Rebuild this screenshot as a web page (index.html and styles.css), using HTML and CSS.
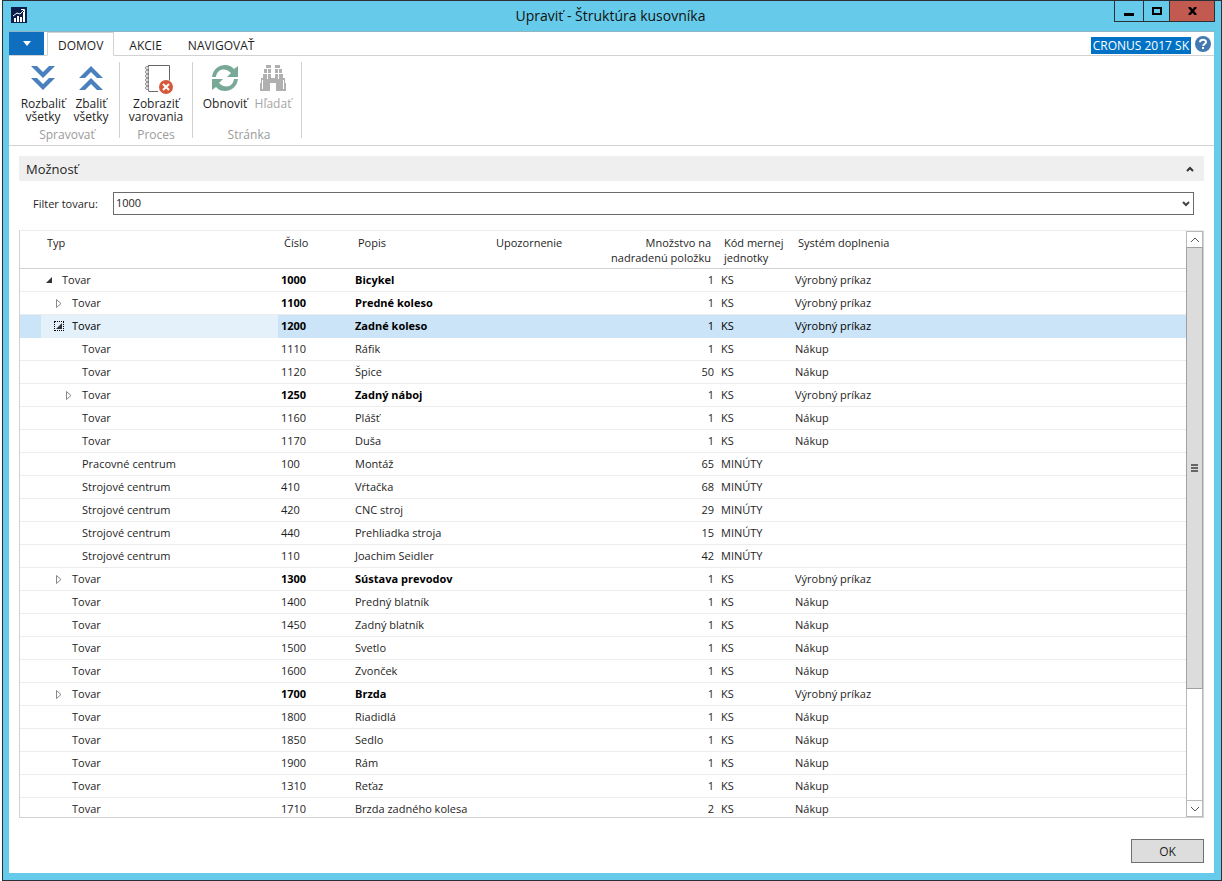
FILE: index.html
```html
<!DOCTYPE html>
<html lang="sk">
  <head>
    <meta charset="UTF-8" />
    <meta name="viewport" content="width=device-width, initial-scale=1.0" />
    <link rel="stylesheet" href="styles.css">
    <title>Upraviť - Štruktúra kusovníka</title>
  </head>
  <body>
    <div class="window">
      <header class="titlebar">
        <svg class="app-icon" width="16" height="16" viewBox="0 0 16 16">
          <rect width="16" height="16" fill="#0b1f4b" />
          <path d="M3 11h2v4H3zM6 9h2v6H6zM9 10h2v5H9zM12 5h2v10h-2z" fill="#fff" />
          <path d="M2 9l4-3 3 1 4-4M10 2.500h3.500V6" fill="none" stroke="#fff" />
        </svg>
        <h1>Upraviť - Štruktúra kusovníka</h1>
        <div class="controls">
          <button class="min" aria-label="Minimalizovať">
            <svg width="10" height="10" viewBox="0 0 10 10"><path d="M0 7h10v3H0z" /></svg>
          </button>
          <button class="max" aria-label="Maximalizovať">
            <svg width="10" height="8" viewBox="0 0 10 8"><path d="M1 1h8v6H1z" fill="none" stroke="#000" stroke-width="2" /></svg>
          </button>
          <button class="close" aria-label="Zavrieť">
            <svg width="9" height="8" viewBox="0 0 9 8"><path d="M1 0l7 8M8 0L1 8" stroke="#000" stroke-width="2.500" /></svg>
          </button>
        </div>
      </header>

      <main class="client">
        <nav class="tabs">
          <button class="file" aria-label="Ponuka">
            <svg width="8" height="5" viewBox="0 0 8 5"><path d="M0 0h8L4 5z" fill="#fff" /></svg>
          </button>
          <button class="tab active">DOMOV</button>
          <button class="tab">AKCIE</button>
          <button class="tab">NAVIGOVAŤ</button>
          <span class="company">CRONUS 2017 SK</span>
          <button class="help" aria-label="Pomocník">
            <svg width="16" height="16" viewBox="0 0 16 16">
              <circle cx="8" cy="8" r="8" fill="#4478b3" />
              <path d="M5 6.200C5 2.800 11 2.900 11 6c0 2-2.800 2-2.800 4" fill="none" stroke="#fff" stroke-width="2" />
              <rect x="7" y="11" width="2" height="2" fill="#fff" />
            </svg>
          </button>
        </nav>

        <div class="ribbon">
          <section class="group">
            <div class="actions">
              <button>
                <svg width="26" height="26" viewBox="0 0 26 26" fill="#4a80bd">
                  <path d="M1 1h6l6 6 6-6h6L13 13zM1 13h6l6 6 6-6h6L13 25z" />
                </svg>
                <span>Rozbaliť</span>
                <span>všetky</span>
              </button>
              <button>
                <svg width="26" height="26" viewBox="0 0 26 26" fill="#4a80bd">
                  <path d="M1 13h6l6-6 6 6h6L13 1zM1 25h6l6-6 6 6h6L13 13z" />
                </svg>
                <span>Zbaliť</span>
                <span>všetky</span>
              </button>
            </div>
            <h2>Spravovať</h2>
          </section>
          <section class="group single">
            <div class="actions">
              <button>
                <svg class="wide" width="34" height="30" viewBox="-4 0 34 30">
                  <path d="M6 1.500h20.500v15M5.500 27.500H15" fill="none" stroke="#666" />
                  <path d="M5.500 1v27" stroke="#777" stroke-dasharray="2 2" />
                  <g fill="#fff" stroke="#888">
                    <circle cx="4" cy="4" r="1.500" />
                    <circle cx="4" cy="8" r="1.500" />
                    <circle cx="4" cy="12" r="1.500" />
                    <circle cx="4" cy="16" r="1.500" />
                    <circle cx="4" cy="20" r="1.500" />
                    <circle cx="4" cy="24" r="1.500" />
                  </g>
                  <circle cx="23" cy="23" r="7" fill="#d6583a" />
                  <path d="M20 20l6 6M26 20l-6 6" stroke="#fff" stroke-width="2" />
                </svg>
                <span>Zobraziť</span>
                <span>varovania</span>
              </button>
            </div>
            <h2>Proces</h2>
          </section>
          <section class="group">
            <div class="actions">
              <button>
                <svg width="26" height="26" viewBox="0 0 26 26" fill="#78a996">
                  <path d="M0 12C1 4 7 0 13 0c4 0 6 1 9 4l4-3v11H15l4-4C13 2 5 4 4 12z" />
                  <path d="M26 14c-1 8-7 12-13 12-4 0-6-1-9-4l-4 3V14h11l-4 4c6 6 14 4 15-4z" />
                </svg>
                <span>Obnoviť</span>
              </button>
              <button disabled>
                <svg width="26" height="26" viewBox="0 0 26 26" fill="#b0b0b0">
                  <path d="M6 0h5v3H6zM15 0h5v3h-5zM4 4h7v4H4zM15 4h7v4h-7zM3 9h8v4H3zM15 9h8v4h-8zM1 13h24v5H1zM0 18h10v8H0zM16 18h10v8H16z" />
                  <path d="M7.500 4v10M18.500 4v10M2.500 15v9M23.500 15v9" stroke="#fff" />
                </svg>
                <span>Hľadať</span>
              </button>
            </div>
            <h2>Stránka</h2>
          </section>
        </div>

        <div class="content">
          <div class="fasttab">
            <h2>Možnosť</h2>
            <button aria-label="Zbaliť">
              <svg width="8" height="6" viewBox="0 0 8 6"><path d="M1 5l3-3 3 3" fill="none" stroke="#333" stroke-width="2" /></svg>
            </button>
          </div>

          <div class="filter">
            <label for="filter">Filter tovaru:</label>
            <div class="combo">
              <select id="filter">
                <option>1000</option>
              </select>
              <svg width="8" height="6" viewBox="0 0 8 6"><path d="M1 1l3 3 3-3" fill="none" stroke="#444" stroke-width="2" /></svg>
            </div>
          </div>

          <div class="grid">
            <div class="viewport">
              <table>
                <colgroup>
                  <col class="c-mark"><col class="c-type"><col class="c-no"><col class="c-name">
                  <col class="c-warn"><col class="c-qty"><col class="c-unit"><col>
                </colgroup>
                <thead>
                  <tr>
                    <th></th>
                    <th>Typ</th>
                    <th>Číslo</th>
                    <th>Popis</th>
                    <th>Upozornenie</th>
                    <th class="num">Množstvo na nadradenú položku</th>
                    <th>Kód mernej jednotky</th>
                    <th>Systém doplnenia</th>
                  </tr>
                </thead>
                <tbody id="rows"></tbody>
              </table>
            </div>
            <div class="scrollbar">
              <button aria-label="Nahor">
                <svg width="8" height="6" viewBox="0 0 8 6"><path d="M0 5l4-4 4 4" fill="none" stroke="#555" /></svg>
              </button>
              <div class="track">
                <div class="thumb"><i></i></div>
              </div>
              <button aria-label="Nadol">
                <svg width="8" height="6" viewBox="0 0 8 6"><path d="M0 1l4 4 4-4" fill="none" stroke="#555" /></svg>
              </button>
            </div>
          </div>

          <footer>
            <button class="ok">OK</button>
          </footer>
        </div>
      </main>
    </div>
    <script src="script.js"></script>
  </body>
</html>
```
FILE: styles.css
```css
* {
  margin: 0;
  padding: 0;
  box-sizing: border-box;
}
body {
  height: 100vh;
  padding-left: 2px;
  background-color: #fff;
  color: #1e1e1e;
  font-family: "Open Sans", "Noto Sans", sans-serif;
  font-size: 12px;
}
button {
  border: none;
  background: none;
  color: inherit;
  font: inherit;
}
svg {
  display: block;
}
h1,
h2 {
  font-weight: normal;
}

.window {
  display: flex;
  flex-direction: column;
  height: 100%;
  padding: 0 7px 7px 6px;
  border: 1px solid #2b2f36;
  background-color: #66cbea;
}
.titlebar {
  display: grid;
  grid-template-columns: 98px 1fr 101px;
  height: 30px;
  margin-right: -1px;
}
.app-icon {
  margin: 6px 0 0 2px;
}
.titlebar h1 {
  text-align: center;
  font-size: 14px;
  line-height: 29px;
  color: #111;
}
.controls {
  display: flex;
  height: 21px;
  border: 1px solid #2b2f36;
  border-top: none;
}
.controls button {
  display: flex;
  align-items: center;
  justify-content: center;
}
.min {
  width: 28px;
}
.controls .max {
  width: 27px;
  border: 1px solid #2b2f36;
  border-width: 0 1px;
}
.controls .close {
  flex: 1;
  background-color: #c35a50;
}

.client {
  flex: 1;
  min-height: 0;
  display: flex;
  flex-direction: column;
  background-color: #fff;
  border-top: 1px solid #8fb4c2;
}
.tabs {
  display: flex;
  align-items: flex-end;
  height: 24px;
  border-bottom: 1px solid #d2d2d2;
}
.file {
  display: flex;
  align-items: center;
  justify-content: center;
  width: 35px;
  height: 23px;
  margin-right: 3px;
  background-color: #106ebe;
}
.tab {
  height: 24px;
  padding: 2px 10px 0;
  margin-right: 4px;
  margin-bottom: -1px;
  border: 1px solid transparent;
  line-height: 22px;
}
.tab.active {
  background-color: #fff;
  border-color: #d2d2d2;
  border-bottom-color: #fff;
}
.company {
  margin: 0 4px 1px auto;
  padding: 0 2px;
  line-height: 17px;
  background-color: #0072c6;
  color: #fff;
}
.help {
  margin: 0 3px 3px 0;
}

.ribbon {
  display: flex;
  height: 90px;
  padding: 6px 0 7px 2px;
  border-bottom: 1px solid #d2d2d2;
}
.group {
  display: flex;
  flex-direction: column;
  justify-content: space-between;
  padding: 0 4px 0 8px;
  border-right: 1px solid #d2d2d2;
}
.group.single {
  padding: 0 6px;
}
.actions {
  display: flex;
}
.actions button {
  display: flex;
  flex-direction: column;
  align-items: center;
  width: 48px;
  padding-top: 2px;
  line-height: 13px;
  white-space: nowrap;
}
.single button {
  width: 60px;
}
.actions svg {
  margin: 1px 0 6px;
}
.actions .wide {
  margin: 0 0 3px;
}
.actions button:disabled {
  color: #a6a6a6;
}
.group h2 {
  margin-bottom: -2px;
  text-align: center;
  font-size: 12px;
  line-height: 10px;
  color: #9b9b9b;
}

.content {
  flex: 1;
  min-height: 0;
  display: flex;
  flex-direction: column;
  padding: 10px;
}
.fasttab {
  display: flex;
  align-items: center;
  justify-content: space-between;
  height: 25px;
  padding: 0 10px 0 7px;
  background-color: #efefef;
}
.fasttab h2 {
  font-size: 13px;
}
.filter {
  display: flex;
  align-items: center;
  padding: 11px 10px 15px 14px;
}
.filter label {
  width: 80px;
  font-size: 11px;
}
.combo {
  position: relative;
  flex: 1;
}
.combo select {
  display: block;
  width: 100%;
  height: 23px;
  padding: 0 2px 2px;
  border: 1px solid #6b6b6b;
  border-radius: 0;
  background-color: #fff;
  color: inherit;
  font: inherit;
  font-size: 11px;
  appearance: none;
}
.combo svg {
  position: absolute;
  right: 4px;
  top: 9px;
  pointer-events: none;
}

.grid {
  flex: 1;
  min-height: 0;
  display: flex;
  border: 1px solid #d2d2d2;
  border-top-color: #ececec;
}
.viewport {
  flex: 1;
  overflow: hidden;
}
table {
  width: 100%;
  table-layout: fixed;
  border-collapse: separate;
  border-spacing: 0;
  font-size: 11px;
}
.c-mark {
  width: 21px;
}
.c-type {
  width: 237px;
}
.c-no,
.c-unit {
  width: 74px;
}
.c-name {
  width: 138px;
}
.c-warn {
  width: 92px;
}
.c-qty {
  width: 136px;
}
th {
  height: 38px;
  padding: 4px 6px 0;
  border-bottom: 1px solid #d2d2d2;
  text-align: left;
  vertical-align: top;
  font-weight: normal;
  line-height: 15px;
}
td {
  height: 23px;
  padding: 0 3px;
  border-bottom: 1px solid #ececec;
  line-height: 22px;
  white-space: nowrap;
}
th.num {
  padding-right: 7px;
  text-align: right;
}
td.num {
  padding-right: 4px;
  text-align: right;
}
.strong {
  font-weight: bold;
  color: #000;
}
.type {
  display: flex;
  align-items: center;
}
.type i {
  display: flex;
  align-items: center;
  justify-content: center;
  width: 10px;
  height: 10px;
  margin-right: 8px;
}
.level-1 {
  padding-left: 10px;
}
.level-2 {
  padding-left: 20px;
}
.selected td {
  background-color: #cce4f7;
  border-bottom-color: #cce4f7;
  color: #000;
}
.selected td:nth-child(2) {
  background-color: #e4f1fa;
  border-bottom-color: #e4f1fa;
}
.selected .type i {
  border: 1px dotted #000;
}

.scrollbar {
  display: flex;
  flex-direction: column;
  width: 17px;
  border: 1px solid #b9b9b9;
}
.scrollbar button {
  display: flex;
  align-items: center;
  justify-content: center;
  height: 15px;
}
.track {
  flex: 1;
  margin: 0 -1px;
  border: 1px solid #b9b9b9;
}
.thumb {
  display: flex;
  align-items: center;
  justify-content: center;
  height: 80%;
  margin: -1px -1px 0;
  border: 1px solid #a0a0a0;
  background-color: #dcdcdc;
}
.thumb i {
  width: 7px;
  height: 8px;
  background: repeating-linear-gradient(#666 0 2px, transparent 2px 3px);
}

footer {
  display: flex;
  justify-content: flex-end;
  padding-top: 21px;
}
.ok {
  width: 73px;
  height: 24px;
  border: 1px solid #707070;
  background-color: #dddddd;
}
```
FILE: script.js
```js
// level, arrow, type, number, name, quantity, unit, replenishment
const VP = 'Výrobný príkaz'
const items = [
  [0, 'open', 'Tovar', '1000', 'Bicykel', 1, 'KS', VP],
  [1, 'closed', 'Tovar', '1100', 'Predné koleso', 1, 'KS', VP],
  [1, 'open', 'Tovar', '1200', 'Zadné koleso', 1, 'KS', VP],
  [2, '', 'Tovar', '1110', 'Ráfik', 1, 'KS', 'Nákup'],
  [2, '', 'Tovar', '1120', 'Špice', 50, 'KS', 'Nákup'],
  [2, 'closed', 'Tovar', '1250', 'Zadný náboj', 1, 'KS', VP],
  [2, '', 'Tovar', '1160', 'Plášť', 1, 'KS', 'Nákup'],
  [2, '', 'Tovar', '1170', 'Duša', 1, 'KS', 'Nákup'],
  [2, '', 'Pracovné centrum', '100', 'Montáž', 65, 'MINÚTY', ''],
  [2, '', 'Strojové centrum', '410', 'Vŕtačka', 68, 'MINÚTY', ''],
  [2, '', 'Strojové centrum', '420', 'CNC stroj', 29, 'MINÚTY', ''],
  [2, '', 'Strojové centrum', '440', 'Prehliadka stroja', 15, 'MINÚTY', ''],
  [2, '', 'Strojové centrum', '110', 'Joachim Seidler', 42, 'MINÚTY', ''],
  [1, 'closed', 'Tovar', '1300', 'Sústava prevodov', 1, 'KS', VP],
  [1, '', 'Tovar', '1400', 'Predný blatník', 1, 'KS', 'Nákup'],
  [1, '', 'Tovar', '1450', 'Zadný blatník', 1, 'KS', 'Nákup'],
  [1, '', 'Tovar', '1500', 'Svetlo', 1, 'KS', 'Nákup'],
  [1, '', 'Tovar', '1600', 'Zvonček', 1, 'KS', 'Nákup'],
  [1, 'closed', 'Tovar', '1700', 'Brzda', 1, 'KS', VP],
  [1, '', 'Tovar', '1800', 'Riadidlá', 1, 'KS', 'Nákup'],
  [1, '', 'Tovar', '1850', 'Sedlo', 1, 'KS', 'Nákup'],
  [1, '', 'Tovar', '1900', 'Rám', 1, 'KS', 'Nákup'],
  [1, '', 'Tovar', '1310', 'Reťaz', 1, 'KS', 'Nákup'],
  [1, '', 'Tovar', '1710', 'Brzda zadného kolesa', 2, 'KS', 'Nákup']
]

const arrows = {
  open: '<svg width="6" height="6" viewBox="0 0 6 6"><path d="M6 0v6H0z" fill="#333"/></svg>',
  closed: '<svg width="6" height="9" viewBox="0 0 6 9"><path d="M.5.5v8l4.500-4z" fill="#fff" stroke="#888"/></svg>',
  '': ''
}

document.getElementById('rows').innerHTML = items
  .map(([level, arrow, type, no, name, qty, unit, system]) => {
    const strong = arrow ? 'strong' : ''
    return `<tr class="${no === '1200' ? 'selected' : ''}">
      <td></td>
      <td><div class="type level-${level}"><i>${arrows[arrow]}</i>${type}</div></td>
      <td class="${strong}">${no}</td>
      <td class="${strong}">${name}</td>
      <td></td>
      <td class="num">${qty}</td>
      <td>${unit}</td>
      <td>${system}</td>
    </tr>`
  })
  .join('')
```
